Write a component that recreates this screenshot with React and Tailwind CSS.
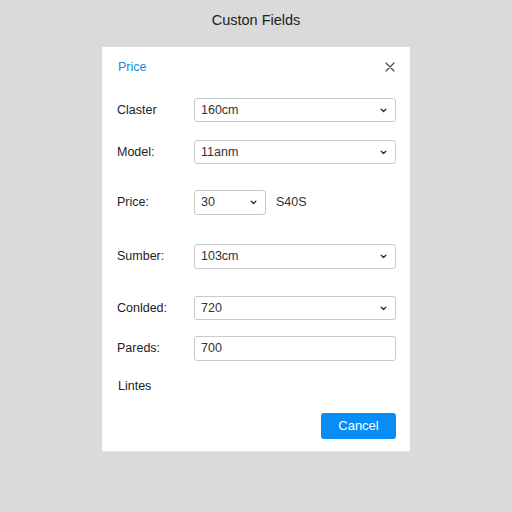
import React from "react";

function Chevron() {
  return (
    <svg width="7" height="5" viewBox="0 0 7 5" className="shrink-0">
      <path d="M1.2 1.3 L3.5 3.6 L5.8 1.3" fill="none" stroke="#333" strokeWidth="1.4" strokeLinecap="round" strokeLinejoin="round" />
    </svg>
  );
}

function Row({ label, value, select = true, mt, h = "h-[24px]" }) {
  return (
    <div className={`flex items-center ${mt}`}>
      <div className="w-[77px] text-[12.5px] text-[#222]">{label}</div>
      <div className={`flex-1 ${h} border border-[#c9c9c9] rounded-[3px] flex items-center pl-[6px] pr-[8px]`}>
        <span className="flex-1 text-[12.5px] text-[#333]">{value}</span>
        {select && <Chevron />}
      </div>
    </div>
  );
}

export default function App() {
  return (
    <div
      className="w-full h-[512px] bg-[#dadada] flex flex-col items-center"
      style={{ fontFamily: '"Liberation Sans", Arial, sans-serif' }}
    >
      <div className="pt-[11px] leading-[18px] text-[14.5px] text-[#222]">Custon Fields</div>
      <div className="mt-[18px] w-[308px] h-[405px] bg-white border-b border-[#e6e6e6] pl-[15px] pr-[14px] flex flex-col">
        <div className="h-[40px] flex items-center justify-between">
          <span className="text-[12.5px] text-[#1a8ad4] pl-[1px]">Price</span>
          <svg width="10" height="10" viewBox="0 0 10 10" className="mr-[1px]">
            <path d="M1 1 L9 9 M9 1 L1 9" stroke="#444" strokeWidth="1.1" strokeLinecap="round" />
          </svg>
        </div>
        <Row label="Claster" value="160cm" mt="mt-[11px]" />
        <Row label="Model:" value="11anm" mt="mt-[18px]" />
        <div className="flex items-center mt-[26px]">
          <div className="w-[77px] text-[12.5px] text-[#222]">Price:</div>
          <div className="w-[72px] h-[25px] border border-[#c9c9c9] rounded-[3px] flex items-center pl-[6px] pr-[8px]">
            <span className="flex-1 text-[12.5px] text-[#333]">30</span>
            <Chevron />
          </div>
          <span className="ml-[10px] text-[12.5px] text-[#333]">S40S</span>
        </div>
        <Row label="Sumber:" value="103cm" mt="mt-[29px]" h="h-[25px]" />
        <Row label="Conlded:" value="720" mt="mt-[27px]" />
        <Row label="Pareds:" value="700" select={false} mt="mt-[16px]" h="h-[25px]" />
        <div className="mt-[17px] leading-[16px] text-[12.5px] text-[#222] pl-[1px]">Lintes</div>
        <div className="mt-[19px] flex justify-end">
          <button className="w-[75px] h-[26px] rounded-[3px] bg-[#0a8cf5] text-white text-[13px] font-medium">Cancel</button>
        </div>
      </div>
    </div>
  );
}
